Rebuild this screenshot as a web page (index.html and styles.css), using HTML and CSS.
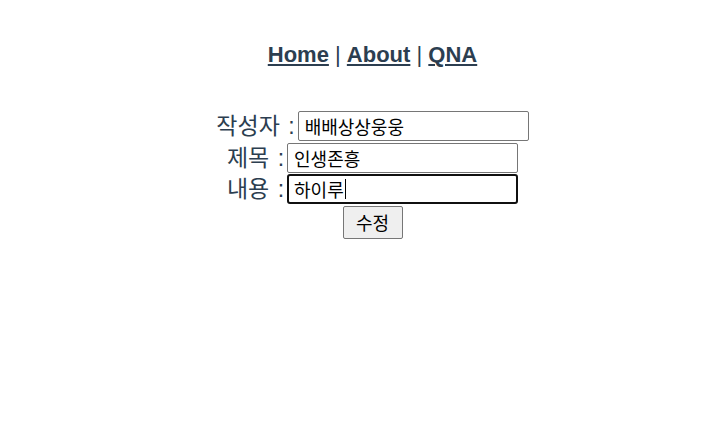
FILE: index.html
```html
<!DOCTYPE html>
<html lang="ko">
<head>
<meta charset="utf-8">
<link rel="stylesheet" href="styles.css">
</head>
<body>
<div class="app">
  <nav class="nav">
    <a href="#" class="nav-link">Home</a> | <a href="#" class="nav-link">About</a> | <a href="#" class="nav-link">QNA</a>
  </nav>
  <form class="form">
    <div class="row"><label class="label">작성자 :</label><input class="field" type="text" value="배배상상웅웅"></div>
    <div class="row"><label class="label">제목 :</label><input class="field" type="text" value="인생존흥"></div>
    <div class="row"><label class="label">내용 :</label><span class="field-wrap"><input class="field field-focus" type="text" value="하이루"><span class="caret"></span></span></div>
    <div class="row"><button class="btn" type="button">수정</button></div>
  </form>
</div>
</body>
</html>
```
FILE: styles.css
```css
html, body {
  margin: 0;
  padding: 0;
  background: #fff;
}
body {
  width: 711px;
  height: 433px;
  overflow: hidden;
}
.app {
  font-family: "Liberation Sans", "Noto Sans CJK KR", sans-serif;
  color: #2c3e50;
  text-align: center;
  padding-left: 34px;
  padding-right: 0;
  margin: 0 8px;
}
.nav {
  padding-top: 42px;
  font-size: 22px;
  line-height: 26px;
  height: 26px;
}
.nav-link {
  font-weight: bold;
  color: #2c3e50;
  text-decoration: underline;
}
.form {
  margin-top: 43px;
  display: flex;
  flex-direction: column;
  gap: 1.5px;
}
.row {
  display: flex;
  justify-content: center;
  align-items: center;
  gap: 3px;
}
.label {
  font-size: 23px;
  line-height: 30px;
  word-spacing: 2px;
  color: #2c3e50;
}
.field-wrap {
  position: relative;
  display: inline-block;
  height: 30px;
}
.field {
  box-sizing: border-box;
  width: 231px;
  height: 30px;
  margin: 0;
  padding: 0 6px;
  border: 1px solid #767676;
  border-radius: 2px;
  font-family: "Liberation Sans", "Noto Sans CJK KR", sans-serif;
  font-size: 18px;
  color: #000;
  background: #fff;
  outline: none;
}
.field-focus {
  border: 2px solid #101010;
  border-radius: 3px;
  padding: 0 5px;
}
.caret {
  position: absolute;
  left: 58px;
  top: 5px;
  width: 1px;
  height: 20px;
  background: #000;
}
.btn {
  box-sizing: border-box;
  width: 60px;
  height: 33px;
  margin: 0;
  padding: 0;
  border: 1px solid #767676;
  border-radius: 2px;
  background: #efefef;
  font-family: "Liberation Sans", "Noto Sans CJK KR", sans-serif;
  font-size: 18px;
  color: #000;
}
```
